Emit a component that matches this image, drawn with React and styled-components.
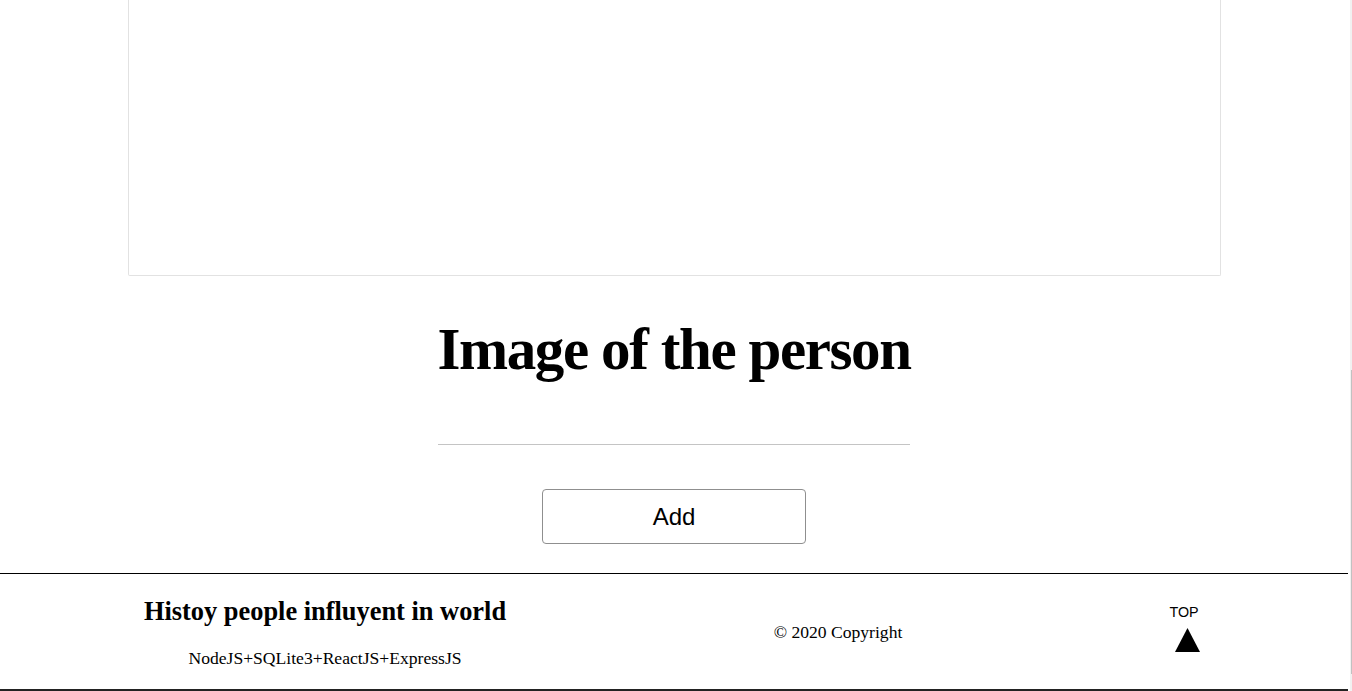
import React from "react";
import styled, { createGlobalStyle } from "styled-components";

const GlobalStyle = createGlobalStyle`
  html, body {
    margin: 0;
    padding: 0;
    background: #fff;
    overflow: hidden;
  }
  body {
    font-family: "Liberation Serif", "Times New Roman", serif;
    color: #000;
  }
`;

const Page = styled.div`
  width: 1348px;
  display: flex;
  flex-direction: column;
  align-items: center;
`;

const PreviewBox = styled.div`
  box-sizing: border-box;
  width: 1093px;
  height: 276px;
  margin-left: 1px;
  border: 1px solid #e2e2e2;
  border-top: none;
  border-radius: 0 0 2px 2px;
`;

const Title = styled.h1`
  margin: 33px 0 0;
  font-family: "Liberation Serif", "Times New Roman", serif;
  font-weight: 700;
  font-size: 59px;
  line-height: 80px;
  letter-spacing: -1.4px;
  text-align: center;
`;

const ImageInput = styled.input`
  box-sizing: border-box;
  width: 472px;
  height: 30px;
  margin-top: 26px;
  border: none;
  border-bottom: 1px solid #c4c4c4;
  outline: none;
  background: transparent;
`;

const AddButton = styled.button`
  box-sizing: border-box;
  width: 264px;
  height: 55px;
  margin-top: 44px;
  border: 1px solid #8f8f8f;
  border-radius: 4px;
  background: #fff;
  font-family: "Liberation Sans", Arial, sans-serif;
  font-size: 24px;
  color: #000;
`;

const Footer = styled.footer`
  box-sizing: border-box;
  width: 1348px;
  height: 118px;
  margin-top: 29px;
  border-top: 1px solid #000;
  border-bottom: 2px solid #222;
  display: grid;
  grid-template-columns: 650px 376px 1fr;
  align-items: center;
`;

const FooterCol = styled.div`
  display: flex;
  flex-direction: column;
  align-items: center;
  gap: ${(p) => p.gap || 0}px;
  padding-top: ${(p) => p.top || 0}px;
  padding-bottom: ${(p) => p.bottom || 0}px;
`;

const FooterTitle = styled.h2`
  margin: 0;
  font-size: 26.4px;
  font-weight: 700;
  line-height: 30px;
`;

const FooterText = styled.p`
  margin: 0;
  font-size: 17.6px;
  line-height: 20px;
`;

const TopLabel = styled.span`
  font-family: "Liberation Sans", Arial, sans-serif;
  font-size: 14.3px;
  line-height: 16px;
  margin-left: -6px;
`;

const Scrollbar = styled.div`
  position: fixed;
  top: 0;
  right: 0;
  width: 2px;
  height: 100%;
  background: #f1f1f1;
  &::after {
    content: "";
    position: absolute;
    top: 370px;
    left: 1px;
    width: 1px;
    height: 304px;
    background: #c1c1c1;
  }
`;

function TopArrow() {
  return (
    <svg width="25" height="24" viewBox="0 0 25 24">
      <polygon points="12.5,0 25,24 0,24" fill="#000" />
    </svg>
  );
}

export default function App() {
  return (
    <>
      <GlobalStyle />
      <Page>
        <PreviewBox />
        <Title>Image of the person</Title>
        <ImageInput type="text" />
        <AddButton>Add</AddButton>
        <Footer>
          <FooterCol gap={22} top={1}>
            <FooterTitle>Histoy people influyent in world</FooterTitle>
            <FooterText>NodeJS+SQLite3+ReactJS+ExpressJS</FooterText>
          </FooterCol>
          <FooterCol>
            <FooterText>© 2020 Copyright</FooterText>
          </FooterCol>
          <FooterCol gap={8} bottom={7}>
            <TopLabel>TOP</TopLabel>
            <TopArrow />
          </FooterCol>
        </Footer>
      </Page>
      <Scrollbar />
    </>
  );
}
